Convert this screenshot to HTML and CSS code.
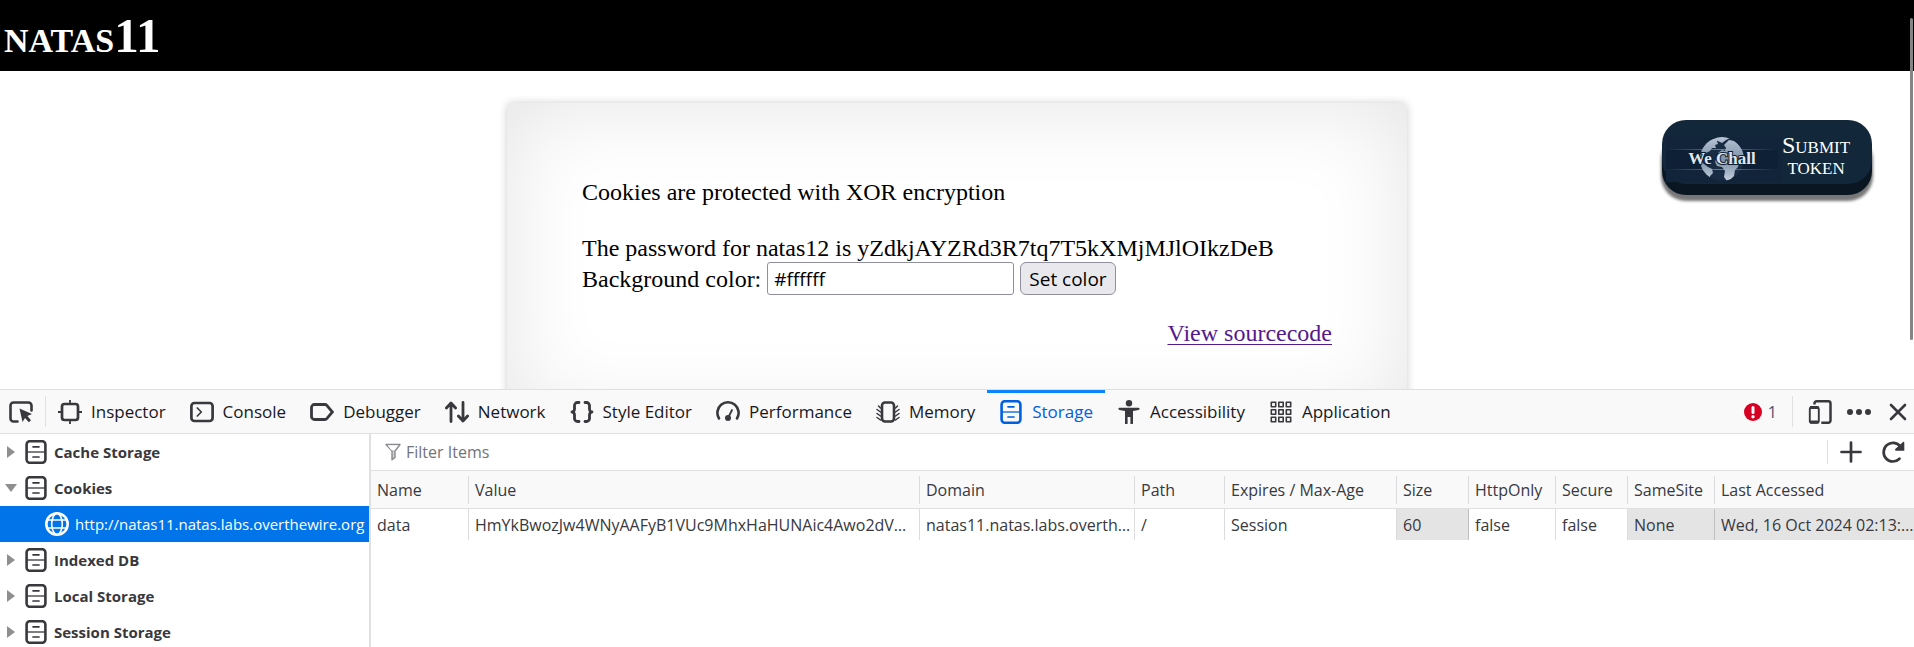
FILE: index.html
```html
<!DOCTYPE html>
<html lang="en">
<head>
<meta charset="utf-8">
<title>natas11</title>
<link rel="stylesheet" href="styles.css">
</head>
<body>
<svg class="sprite" aria-hidden="true">
  <symbol id="i-storage" viewBox="0 0 24 24"><rect x="2.6" y="1.2" width="18.8" height="21.6" rx="3.2" fill="none" stroke="currentColor" stroke-width="2.6"/><path d="M3 12h18" stroke="currentColor" stroke-width="1.3"/><path d="M9 6.8h6M9 17h6" stroke="currentColor" stroke-width="1.7" stroke-linecap="round"/></symbol>
  <symbol id="i-right" viewBox="0 0 12 14"><path d="M2 1l8 6-8 6z" fill="#8f8f90"/></symbol>
  <symbol id="i-down" viewBox="0 0 12 14"><path d="M0 3h12L6 11z" fill="#8f8f90"/></symbol>
</svg>

<main class="page">
  <header class="banner"><h1>natas11</h1></header>
  <section class="card">
    <p class="intro">Cookies are protected with XOR encryption</p>
    <p>The password for natas12 is yZdkjAYZRd3R7tq7T5kXMjMJlOIkzDeB</p>
    <form class="color-form">
      <label for="bgcolor">Background color:</label>
      <input id="bgcolor" type="text" value="#ffffff">
      <button type="button">Set color</button>
    </form>
    <p class="source"><a href="#source">View sourcecode</a></p>
  </section>
  <button class="wechall" type="button">
    <svg class="wechall-logo" viewBox="0 0 120 46">
      <defs>
        <linearGradient id="streak"><stop offset="0" stop-color="#8fb4d8" stop-opacity="0"/><stop offset=".5" stop-color="#8fb4d8" stop-opacity=".6"/><stop offset="1" stop-color="#8fb4d8" stop-opacity="0"/></linearGradient>
        <linearGradient id="land" x1="0" y1="0" x2="0" y2="1"><stop offset="0" stop-color="#b9c7d8"/><stop offset=".5" stop-color="#7d90a6"/><stop offset="1" stop-color="#d3deea"/></linearGradient>
        <clipPath id="globe"><circle cx="60" cy="23" r="22"/></clipPath>
      </defs>
      <rect x="4" y="1" width="116" height="45" fill="#112439"/>
      <rect x="4" y="14" width="112" height="19" fill="#0e2035"/>
      <circle cx="60" cy="23" r="22" fill="#182c43"/>
      <g clip-path="url(#globe)">
        <path fill="url(#land)" d="M37 19c1-7 6-13 12-16l5-1 4 1-3 2 1 3-3 1 1 3-4 0-2 3-4 2-3 3-2 6 3 2 4 3 4 2 1 4-3 3-1 5 2 4-6-5-5-10zM54 1l10-1 4 2-4 2-4 3-4-2zM62 9l5-5 5 1c6 4 10 10 11 18l-1 5-5-5-3 4-4-6-4 1-4-3-4 1-2-3 4-3 3 1 1-3zM55 21l7-3 8 2 2 5 5 1-1 5-3 3-1 6-4 4-3 1-3-4 1-6-3-4-5-1-2-4z"/>
        <path d="M43 40c5 4 11 6 18 6 9 0 17-5 20-13" fill="none" stroke="#7d90a6" stroke-width="1"/>
      </g>
      <path d="M4 13h110v1H4zM4 33h110v1H4z" fill="url(#streak)"/>
      <text class="logo-text" x="60" y="28" text-anchor="middle">We Chall</text>
    </svg>
    <span>Submit token</span>
  </button>
  <div class="scroll-thumb"></div>
</main>

<section class="devtools">
  <nav class="toolbar">
    <button class="icon-btn pick" aria-label="Pick element"><svg viewBox="0 0 24 24"><path d="M8.500 21.500H4.500a3 3 0 0 1-3-3v-13a3 3 0 0 1 3-3h15a3 3 0 0 1 3 3v5" fill="none" stroke="currentColor" stroke-width="2.600" stroke-linecap="round"/><path d="M10.500 8.500l12.500 5.500-4.600 1.900 3.600 4.300-2.200 2-3.800-4.300-2.500 4.100z" fill="currentColor"/></svg></button>
    <i class="sep"></i>
    <button class="tab"><svg viewBox="0 0 24 24" fill="none" stroke="currentColor"><rect x="4" y="4" width="16" height="16" rx="2.500" stroke-width="2.700"/><path d="M12 0v4M12 20v4M0 12h4M20 12h4" stroke-width="1.800"/></svg>Inspector</button>
    <button class="tab"><svg viewBox="0 0 24 24" fill="none" stroke="currentColor" stroke-linecap="round" stroke-linejoin="round"><rect x="1.400" y="3" width="21.200" height="18" rx="3" stroke-width="2.700"/><path d="M7.300 8l4 4-4 4" stroke-width="1.700"/></svg>Console</button>
    <button class="tab"><svg viewBox="0 0 24 24"><path d="M4.500 4.500h10.300c.8 0 1.500.3 2 .9l5.600 6.600-5.600 6.600c-.5.6-1.200.9-2 .9H4.500a3 3 0 0 1-3-3v-9a3 3 0 0 1 3-3z" fill="none" stroke="currentColor" stroke-width="2.800"/></svg>Debugger</button>
    <button class="tab"><svg viewBox="0 0 24 24" fill="none" stroke="currentColor" stroke-width="2.800" stroke-linecap="round" stroke-linejoin="round"><path d="M6 21.500V3.500M1.400 8L6 3l4.600 5M18 2.500v18M13.400 16l4.600 5 4.600-5"/></svg>Network</button>
    <button class="tab"><svg viewBox="0 0 24 24" fill="none" stroke="currentColor" stroke-width="2.800" stroke-linecap="round" stroke-linejoin="round"><path d="M9 2.500H7.500a3 3 0 0 0-3 3V9c0 1.500-1 3-2.500 3 1.500 0 2.500 1.500 2.500 3v3.500a3 3 0 0 0 3 3H9M15 2.500h1.500a3 3 0 0 1 3 3V9c0 1.500 1 3 2.500 3-1.500 0-2.500 1.500-2.500 3v3.500a3 3 0 0 1-3 3H15"/></svg>Style Editor</button>
    <button class="tab"><svg viewBox="0 0 24 24" fill="none" stroke="currentColor" stroke-linecap="round"><path d="M3 18.500a10.600 10.600 0 1 1 18 0" stroke-width="2.600"/><path d="M12.500 17l3.500-7" stroke-width="1.800"/><circle cx="12" cy="18" r="3" fill="currentColor" stroke="none"/></svg>Performance</button>
    <button class="tab"><svg viewBox="0 0 24 24" fill="none" stroke="currentColor" stroke-linecap="round"><rect x="6" y="2.500" width="12" height="19" rx="3" stroke-width="2.600"/><path d="M4.500 8L2.500 6M4.500 12L1 9.500M4.500 16L1 13.500M4.500 20L1 17.500M19.500 8l2-2M19.500 12L23 9.500M19.500 16l3.500-2.500M19.500 20l3.500-2.500" stroke-width="1.500"/></svg>Memory</button>
    <button class="tab active"><svg><use href="#i-storage"/></svg>Storage</button>
    <button class="tab"><svg viewBox="0 0 24 24" fill="currentColor"><circle cx="12" cy="3.200" r="3.200"/><path d="M2.500 7.700h19a1 1 0 0 1 0 2.200L16 11v12.200a.8.8 0 0 1-2.600 0V17h-2.800v6.200a.8.8 0 0 1-2.600 0V11L2.500 9.900a1 1 0 0 1 0-2.200z"/></svg>Accessibility</button>
    <button class="tab"><svg viewBox="0 0 24 24" fill="none" stroke="currentColor" stroke-width="1.600"><path d="M2.300 2.300h4.400v4.400H2.300zM9.800 2.300h4.400v4.400H9.800zM17.300 2.300h4.400v4.400h-4.400zM2.300 9.800h4.400v4.400H2.300zM9.800 9.800h4.400v4.400H9.800zM17.300 9.800h4.400v4.400h-4.400zM2.300 17.300h4.400v4.400H2.300zM9.800 17.300h4.400v4.400H9.800zM17.300 17.300h4.400v4.400h-4.400z" stroke-linejoin="round"/></svg>Application</button>
    <div class="tools">
      <button class="errors"><svg viewBox="0 0 18 18"><circle cx="9" cy="9" r="9" fill="#d70022"/><path d="M9 4.500v5" stroke="#fff" stroke-width="3" stroke-linecap="round"/><circle cx="9" cy="13.700" r="1.700" fill="#fff"/></svg>1</button>
      <i class="sep"></i>
      <button class="icon-btn" aria-label="Responsive mode"><svg viewBox="0 0 24 24" fill="none" stroke="currentColor"><path d="M6.500 4.500V3.500a2.200 2.200 0 0 1 2.200-2.200h11.600a2.200 2.200 0 0 1 2.200 2.200v17a2.200 2.200 0 0 1-2.200 2.200h-7" stroke-width="2.500"/><rect x="1.800" y="7.500" width="9" height="15.300" rx="1.500" stroke-width="1.900"/><path d="M2 7.500h8.600M2 22h8.600" stroke-width="2.800"/></svg></button>
      <button class="icon-btn" aria-label="More"><svg viewBox="0 0 24 24" fill="currentColor"><circle cx="3" cy="12" r="3"/><circle cx="12" cy="12" r="3"/><circle cx="21" cy="12" r="3"/></svg></button>
      <button class="icon-btn" aria-label="Close"><svg viewBox="0 0 24 24"><path d="M5 5l14 14M19 5L5 19" stroke="currentColor" stroke-width="2.600" stroke-linecap="round"/></svg></button>
    </div>
  </nav>

  <div class="panel">
    <ul class="tree">
      <li><svg class="twisty"><use href="#i-right"/></svg><svg class="ico"><use href="#i-storage"/></svg>Cache Storage</li>
      <li><svg class="twisty"><use href="#i-down"/></svg><svg class="ico"><use href="#i-storage"/></svg>Cookies</li>
      <li class="selected"><svg class="ico" viewBox="0 0 24 24" fill="none" stroke="#fff"><circle cx="12" cy="12" r="10.700" stroke-width="2.600"/><ellipse cx="12" cy="12" rx="5.300" ry="10.500" stroke-width="1.600"/><path d="M2.500 8h19M2.500 16h19" stroke-width="1.600"/></svg>http://natas11.natas.labs.overthewire.org</li>
      <li><svg class="twisty"><use href="#i-right"/></svg><svg class="ico"><use href="#i-storage"/></svg>Indexed DB</li>
      <li><svg class="twisty"><use href="#i-right"/></svg><svg class="ico"><use href="#i-storage"/></svg>Local Storage</li>
      <li><svg class="twisty"><use href="#i-right"/></svg><svg class="ico"><use href="#i-storage"/></svg>Session Storage</li>
    </ul>
    <div class="data">
      <div class="filter">
        <svg class="funnel" viewBox="0 0 16 18"><path d="M1 1.500h14l-5 6.500v6.500L7 16.800V8z" fill="#d0d0d2" stroke="#8a8a8e" stroke-width="1.400" stroke-linejoin="round"/><path d="M2.500 2.200h11l-4 5h-3z" fill="#fff"/></svg>
        <input type="text" placeholder="Filter Items" aria-label="Filter Items">
        <i class="sep"></i>
        <button class="icon-btn" aria-label="Add item"><svg viewBox="0 0 24 24"><path d="M12 2.500v19M2.500 12h19" stroke="currentColor" stroke-width="2.700" stroke-linecap="round"/></svg></button>
        <button class="icon-btn" aria-label="Refresh"><svg viewBox="0 0 24 24"><path d="M18.500 18.800A9.300 9.300 0 1 1 19.300 6.500" fill="none" stroke="currentColor" stroke-width="2.700" stroke-linecap="round"/><path d="M22.300 1.800a1 1 0 0 1 1 1v7.900H15a1 1 0 0 1-.7-1.700z" fill="currentColor"/></svg></button>
      </div>
      <table>
        <colgroup><col class="w-name"><col><col class="w-domain"><col class="w-path"><col class="w-expires"><col class="w-short"><col class="w-mid"><col class="w-short"><col class="w-mid"><col class="w-last"></colgroup>
        <thead><tr><th><span>Name</span></th><th><span>Value</span></th><th><span>Domain</span></th><th><span>Path</span></th><th><span>Expires / Max-Age</span></th><th><span>Size</span></th><th><span>HttpOnly</span></th><th><span>Secure</span></th><th><span>SameSite</span></th><th><span>Last Accessed</span></th></tr></thead>
        <tbody><tr><td>data</td><td>HmYkBwozJw4WNyAAFyB1VUc9MhxHaHUNAic4Awo2dV…</td><td>natas11.natas.labs.overth…</td><td>/</td><td>Session</td><td class="shade">60</td><td>false</td><td>false</td><td class="shade">None</td><td class="shade">Wed, 16 Oct 2024 02:13:…</td></tr></tbody>
      </table>
    </div>
  </div>
</section>
</body>
</html>
```
FILE: styles.css
```css
* { box-sizing: border-box; }
body {
  margin: 0;
  height: 100vh;
  display: flex;
  flex-direction: column;
  overflow: hidden;
  background: #fff;
  color: #000;
}
button { font: inherit; color: inherit; border: 0; background: none; padding: 0; margin: 0; }
p, h1, ul { margin: 0; padding: 0; }
svg { display: block; flex: none; }
.sprite { position: absolute; width: 0; height: 0; }

/* Web page */
.page {
  position: relative;
  flex: 1;
  min-height: 0;
  overflow: hidden;
  font: 24px/28px "Liberation Serif", "Times New Roman", serif;
}
.banner { background: #000; color: #fff; padding: 8px 4px; }
.banner h1 { font-size: 49px; line-height: 55px; font-variant: small-caps; }
.card {
  width: 900px;
  max-width: 100%;
  margin: 32px auto 0;
  padding: 75px;
  border-radius: 6px;
  box-shadow: 0 0 8px rgba(0, 0, 0, .2), inset 0 0 90px rgba(0, 0, 0, .11);
}
.intro { margin-bottom: 28px; }
.color-form { display: flex; align-items: center; gap: 6px; }
.color-form input, .color-form button {
  height: 33px;
  border: 1px solid #8f8f9d;
  font: 19px/24px "Open Sans", sans-serif;
}
.color-form input { width: 247px; padding: 0 6px; border-radius: 3px; background: #fff; }
.color-form button { padding: 0 8px; border-radius: 6px; background: #e9e9ed; }
.source { margin-top: 24px; text-align: right; }
.source a { color: #551a8b; text-underline-offset: 3px; text-decoration-thickness: 1px; }
.wechall {
  position: absolute;
  top: 120px;
  right: 42px;
  width: 210px;
  height: 64px;
  display: flex;
  align-items: center;
  border-radius: 24px;
  background: #12273a;
  color: #fff;
  font-size: 24px;
  line-height: 21px;
  font-variant: small-caps;
  box-shadow: 0 11px #0a1621, 0 16px 3px 1px #777;
}
.wechall-logo { width: 120px; height: 46px; margin-top: 14px; }
.wechall span { flex: 1; padding: 8px 30px 0 0; }
.logo-text {
  font: bold 17px "Liberation Serif", serif;
  fill: #dfe7f1;
  stroke: #0d1c30;
  stroke-width: 2px;
  paint-order: stroke;
}
.scroll-thumb {
  position: absolute;
  top: 18px;
  right: 1px;
  width: 3px;
  height: 322px;
  border-radius: 2px;
  background: #858585;
}

/* Developer tools */
.devtools {
  height: 258px;
  display: flex;
  flex-direction: column;
  font: 16px/20px "Open Sans", "Noto Sans", sans-serif;
  color: #38383d;
}
.toolbar {
  display: flex;
  align-items: center;
  height: 45px;
  flex: none;
  border: solid #e0e0e2;
  border-width: 1px 0;
  background: #f9f9fa;
}
.sep { width: 1px; height: 31px; background: #e0e0e2; }
.icon-btn svg, .tab svg { width: 24px; height: 24px; }
.pick { padding: 0 12px 0 9px; }
.tab {
  height: 43px;
  display: flex;
  align-items: center;
  gap: 9px;
  padding: 0 12px;
  font-size: 17px;
  color: #18181a;
  white-space: nowrap;
}
.tab svg { color: #38383d; }
.tab.active { color: #0060df; box-shadow: inset 0 3px #0a84ff; }
.tab.active svg { color: #0060df; }
.tools { display: flex; align-items: center; margin-left: auto; gap: 15px; padding-right: 4px; }
.errors { display: flex; align-items: center; gap: 6px; color: #50506a; }
.errors svg { width: 18px; height: 18px; }

.panel { flex: 1; min-height: 0; display: flex; overflow: hidden; }
.tree {
  width: 371px;
  flex: none;
  overflow: hidden;
  list-style: none;
  border-right: 2px solid #e0e0e2;
  font-size: 15px;
  font-weight: 700;
}
.tree li { display: flex; align-items: center; height: 36px; padding-left: 5px; white-space: nowrap; }
.twisty { width: 12px; height: 14px; margin-right: 7px; }
.ico { width: 24px; height: 24px; margin-right: 6px; }
.tree .selected { padding-left: 45px; background: #0074e8; color: #fff; font-weight: 400; }

.data { flex: 1; min-width: 0; }
.filter {
  display: flex;
  align-items: center;
  height: 37px;
  padding: 0 9px 0 14px;
  border-bottom: 1px solid #e0e0e2;
}
.funnel { width: 16px; height: 18px; }
.filter input {
  flex: 1;
  height: 30px;
  border: 0;
  padding: 0 5px;
  font: inherit;
  background: none;
}
.filter input::placeholder { color: #737378; opacity: 1; }
.filter .sep { height: 24px; }
.filter .icon-btn { margin-left: 11px; }
.filter .icon-btn + .icon-btn { margin-left: 18px; }

table { width: 100%; table-layout: fixed; border-collapse: separate; border-spacing: 0; }
th, td { padding: 0; text-align: left; font-weight: 400; white-space: nowrap; overflow: hidden; }
th { height: 38px; background: #f9f9fa; border-bottom: 1px solid #e0e0e2; }
th span { display: block; height: 28px; line-height: 28px; padding-left: 6px; border-right: 1px solid #dcdcde; }
td { height: 31px; padding-left: 6px; border-right: 1px solid #dcdcde; }
th:last-child span, td:last-child { border-right: 0; }
.shade { background: #e4e4e4; border-right-color: #c0c0c2; }
.w-name { width: 98px; }
.w-domain { width: 215px; }
.w-path { width: 90px; }
.w-expires { width: 172px; }
.w-short { width: 72px; }
.w-mid { width: 87px; }
.w-last { width: 199px; }
```
